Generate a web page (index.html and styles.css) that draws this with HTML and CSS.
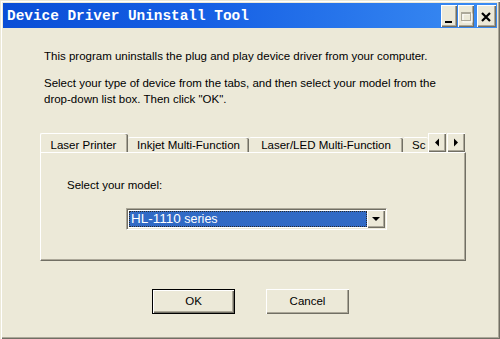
FILE: index.html
```html
<!DOCTYPE html>
<html>
<head>
<meta charset="utf-8">
<link rel="stylesheet" href="styles.css">
</head>
<body>
<div class="window">
  <div class="titlebar">
    <span class="title">Device Driver Uninstall Tool</span>
    <div class="ctrls">
      <div class="tbtn min"><svg width="16" height="22" viewBox="0 0 16 22"><rect x="4" y="16" width="7" height="2" fill="#000"/></svg></div>
      <div class="tbtn max"><svg width="16" height="22" viewBox="0 0 16 22"><rect x="5" y="9" width="9" height="8" fill="none" stroke="#fff" stroke-width="1"/><rect x="3.5" y="7.5" width="9" height="8" fill="none" stroke="#aca899" stroke-width="1"/><rect x="3" y="7" width="10" height="2" fill="#aca899"/></svg></div>
      <div class="tbtn close"><svg width="19" height="22" viewBox="0 0 19 22"><path d="M5 8 L13 16 M13 8 L5 16" stroke="#000" stroke-width="2.2" fill="none"/></svg></div>
    </div>
  </div>
  <div class="content">
    <p class="p1">This program uninstalls the plug and play device driver from your computer.</p>
    <p class="p2">Select your type of device from the tabs, and then select your model from the<br>drop-down list box. Then click "OK".</p>
    <div class="tabs">
      <div class="strip">
        <div class="tablist">
          <div class="tab active">Laser Printer</div>
          <div class="tab t2">Inkjet Multi-Function</div>
          <div class="tab t3">Laser/LED Multi-Function</div>
          <div class="tab t4">Sc</div>
        </div>
        <div class="scroller">
          <div class="sbtn"><svg width="18" height="19" viewBox="0 0 18 19"><path d="M7 9.5 L11 5.5 L11 13.5 Z" fill="#000"/></svg></div>
          <div class="sbtn"><svg width="18" height="19" viewBox="0 0 18 19"><path d="M11 9.5 L7 5.5 L7 13.5 Z" fill="#000"/></svg></div>
        </div>
      </div>
      <div class="panel">
        <div class="label">Select your model:</div>
        <div class="combo">
          <div class="field"><span class="sel"><span class="model">HL-1110</span> series</span></div>
          <div class="drop"><svg width="18" height="18" viewBox="0 0 18 18"><path d="M5 7 L13 7 L9 11 Z" fill="#000"/></svg></div>
        </div>
      </div>
    </div>
    <div class="buttons">
      <div class="btn default">OK</div>
      <div class="btn">Cancel</div>
    </div>
  </div>
</div>
</body>
</html>
```
FILE: styles.css
```css
html, body {
  margin: 0;
  padding: 0;
  background: #ece9d8;
}
body {
  width: 500px;
  height: 339px;
  overflow: hidden;
  font-family: "Liberation Sans", Arial, sans-serif;
  font-size: 11.5px;
  color: #000;
}
.window {
  box-sizing: border-box;
  width: 500px;
  height: 339px;
  padding: 3px 3px 2px 3px;
  background: #ece9d8;
  box-shadow: inset 1px 1px 0 #ece9d8, inset 2px 2px 0 #ffffff, inset -1px -1px 0 #716f64, inset -2px -2px 0 #aca899;
}
.titlebar {
  height: 25px;
  display: flex;
  align-items: center;
  background: linear-gradient(to right, #0a4ed6 0%, #155fe4 40%, #3b8df3 100%);
}
.title {
  padding-left: 4px;
  font-family: "Liberation Mono", "Courier New", monospace;
  font-weight: bold;
  font-size: 14.4px;
  color: #fff;
}
.ctrls {
  margin-left: auto;
  display: flex;
  align-items: center;
  margin-right: 1px;
}
.tbtn {
  height: 22px;
  width: 16px;
  background: #ece9d8;
  box-shadow: inset 1px 1px 0 #fff, inset -1px -1px 0 #716f64, inset -2px -2px 0 #aca899;
}
.tbtn svg { display: block; }
.tbtn.close { width: 19px; margin-left: 3px; }
.tbtn.max { margin-left: 1px; }
.content {
  padding-left: 41px;
}
.p1 {
  margin: 21px 0 0 0;
  line-height: 14px;
}
.p2 {
  margin: 12px 0 0 0;
  line-height: 16px;
}
.tabs {
  margin: 26px 0 0 -4px;
  width: 426px;
}
.strip {
  display: flex;
  height: 19px;
  align-items: flex-end;
}
.tablist {
  display: flex;
  align-items: flex-end;
  width: 388px;
  height: 19px;
  overflow: hidden;
}
.tab {
  flex: none;
  box-sizing: border-box;
  height: 15px;
  line-height: 14px;
  text-align: center;
  background: #ece9d8;
  border-top: 1px solid #fff;
  border-left: 1px solid #fff;
  box-shadow: inset -1px 0 0 #716f64, inset -2px 0 0 #aca899;
  border-top-left-radius: 2px;
  border-top-right-radius: 2px;
}
.tab.active {
  width: 88px;
  height: 21px;
  line-height: 14px;
  padding-top: 4px;
  margin-bottom: -2px;
  position: relative;
  z-index: 1;
  padding-right: 2px;
}
.tab.t2 { width: 121px; border-left: none; }
.tab.t3 { width: 154px; border-left: none; }
.tab.t4 { width: 25px; border-left: none; text-align: left; padding-left: 9px; box-shadow: none; }
.scroller {
  display: flex;
  align-self: flex-start;
}
.sbtn {
  width: 18px;
  height: 19px;
  background: #ece9d8;
  box-shadow: inset 1px 1px 0 #fff, inset -1px -1px 0 #716f64, inset -2px -2px 0 #aca899;
}
.sbtn + .sbtn { margin-left: 1px; }
.sbtn svg { display: block; }
.panel {
  box-sizing: border-box;
  height: 109px;
  border-top: 1px solid #fff;
  border-left: 1px solid #fff;
  border-right: 1px solid #716f64;
  border-bottom: 1px solid #716f64;
  box-shadow: inset -1px -1px 0 #aca899;
  padding: 25px 0 0 26px;
}
.label {
  line-height: 14px;
}
.combo {
  box-sizing: border-box;
  margin: 16px 0 0 59px;
  width: 261px;
  height: 22px;
  display: flex;
  background: #fff;
  border-top: 1px solid #aca899;
  border-left: 1px solid #aca899;
  border-right: 1px solid #fff;
  border-bottom: 1px solid #fff;
  box-shadow: inset 1px 1px 0 #716f64, inset -1px -1px 0 #ece9d8;
  padding: 1px;
}
.field {
  flex: 1;
  display: flex;
  padding: 1px 0 1px 1px;
}
.sel {
  flex: 1;
  box-sizing: border-box;
  background: #316ac5;
  color: #fff;
  border: 1px dotted #2a2a2a;
  line-height: 14px;
  padding-left: 1px;
  font-size: 12.5px;
  white-space: nowrap;
}
.model {
  font-size: 13.5px;
}
.drop {
  width: 18px;
  height: 18px;
  background: #ece9d8;
  box-shadow: inset 1px 1px 0 #fff, inset -1px -1px 0 #716f64, inset -2px -2px 0 #aca899;
}
.drop svg { display: block; }
.buttons {
  display: flex;
  margin: 28px 0 0 108px;
  gap: 31px;
}
.btn {
  box-sizing: border-box;
  width: 83px;
  height: 25px;
  line-height: 24px;
  text-align: center;
  background: #ece9d8;
  box-shadow: inset 1px 1px 0 #fff, inset -1px -1px 0 #716f64, inset -2px -2px 0 #aca899;
}
.btn.default {
  border: 1px solid #000;
  line-height: 22px;
}
```
